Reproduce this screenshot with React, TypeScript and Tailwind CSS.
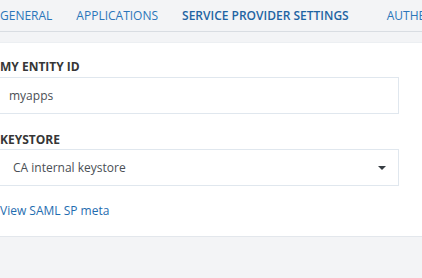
import React from 'react';

const tabs = [
  { label: 'GENERAL', active: false },
  { label: 'APPLICATIONS', active: false },
  { label: 'SERVICE PROVIDER SETTINGS', active: true },
  { label: 'AUTHENTICATION', active: false },
];

export default function App() {
  return (
    <div
      className="w-[422px] h-[278px] overflow-hidden bg-[#f3f4f6]"
      style={{ fontFamily: '"Open Sans", "Liberation Sans", sans-serif' }}
    >
      {/* Tabs */}
      <div className="h-[32px] border-b border-[#d9dde2] flex items-center gap-[24px] whitespace-nowrap overflow-hidden text-[12px] leading-[16px]">
        {tabs.map((tab) => (
          <span
            key={tab.label}
            className={
              tab.active
                ? 'text-[#1f64a3] font-semibold mr-[14px]'
                : 'text-[#2b76ba]'
            }
          >
            {tab.label}
          </span>
        ))}
      </div>

      {/* Panel */}
      <div className="mt-[10px] bg-white border-t border-[#eceff2] border-b border-b-[#e3e7ec] pt-[16px] pb-[16px]">
        <div className="w-[400px] -ml-px">
          <label className="block pl-px text-[12px] leading-[16px] font-bold text-[#363636]">
            MY ENTITY ID
          </label>
          <div className="mt-[2px] h-[37px] border border-[#e0e7ee] flex items-center pl-[9px] text-[12px] text-[#4a4f55]">
            myapps
          </div>

          <label className="block pl-px mt-[18px] text-[12px] leading-[16px] font-bold text-[#363636]">
            KEYSTORE
          </label>
          <div className="mt-[1px] h-[37px] border border-[#e0e7ee] flex items-center justify-between pl-[13px] pr-[12px] text-[12px] text-[#4a4f55]">
            <span>CA internal keystore</span>
            <svg width="8" height="4" viewBox="0 0 8 4">
              <path d="M0 0 H8 L4 4 Z" fill="#363c42" />
            </svg>
          </div>

          <a className="block pl-px mt-[16px] text-[12px] leading-[18px] text-[#1f6db0]">
            View SAML SP meta
          </a>
        </div>
      </div>
    </div>
  );
}
